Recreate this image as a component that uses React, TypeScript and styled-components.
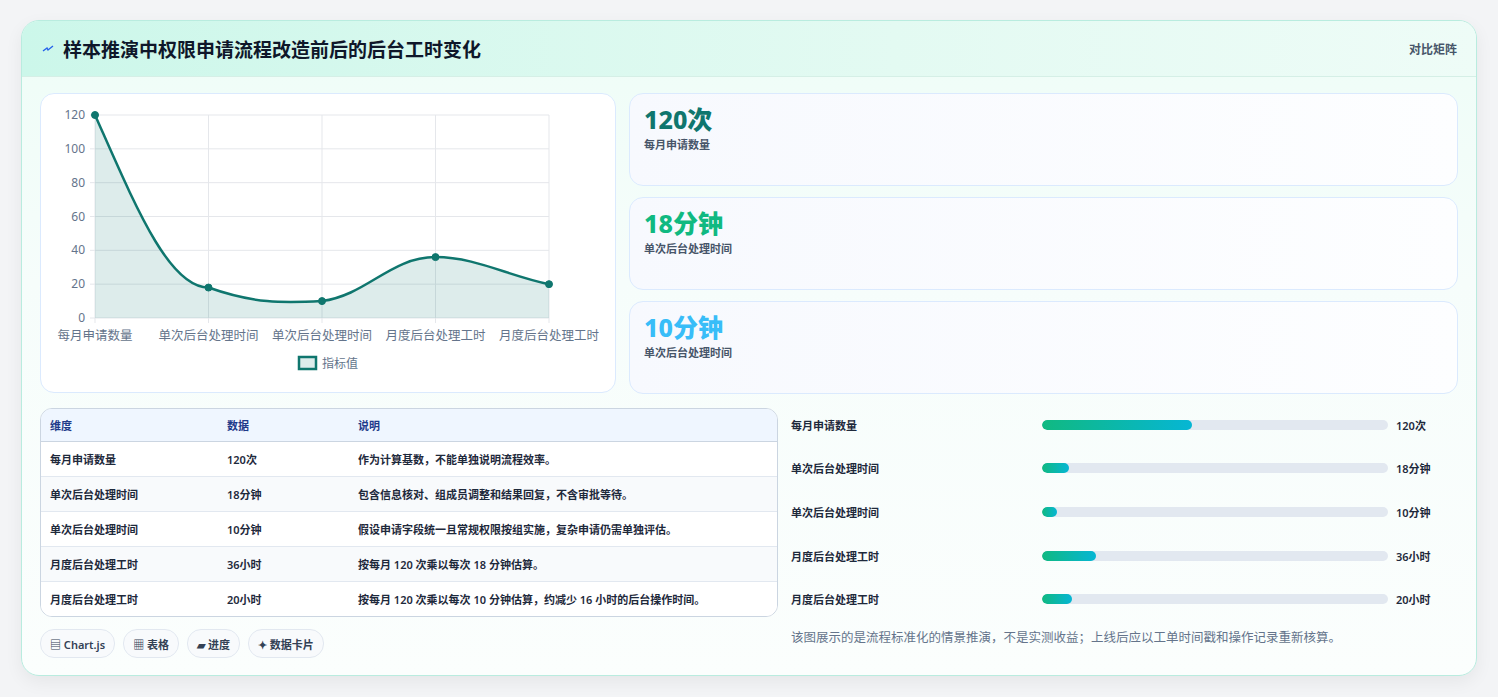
import React from "react";
import styled, { createGlobalStyle } from "styled-components";

const Global = createGlobalStyle`
  html, body { margin: 0; background: #f3f4f6; }
  body { font-family: "Noto Sans", "Noto Sans CJK SC", sans-serif; }
`;

const Page = styled.div`
  padding: 20px 21px 21px 21px;
  height: 697px;
  box-sizing: border-box;
`;

const Card = styled.div`
  border: 1px solid #b9ecdf;
  border-radius: 18px;
  overflow: hidden;
  background: linear-gradient(180deg, #eefdf7 0%, #f6fdfb 40%, #fbfefd 100%);
  box-shadow: 0 6px 18px rgba(0,0,0,0.06);
  height: 656px;
  box-sizing: border-box;
`;

const Header = styled.div`
  height: 55px;
  display: flex;
  align-items: center;
  justify-content: space-between;
  padding: 0 19px 0 20px;
  background: linear-gradient(90deg, #ccf7ea 0%, #e3faf2 60%, #eefcf7 100%);
  border-bottom: 1px solid #d5efe6;
`;

const Title = styled.h1`
  margin: 0;
  font-size: 19px;
  font-weight: 700;
  color: #0f172a;
  display: flex;
  align-items: center;
  gap: 9px;
`;

const HeaderTag = styled.span`
  font-size: 12px;
  font-weight: 600;
  color: #475569;
`;

const Body = styled.div`
  padding: 16px 18px 0 18px;
  display: flex;
  flex-direction: column;
  gap: 14px;
`;

const TopRow = styled.div`
  display: grid;
  grid-template-columns: 576px 1fr;
  gap: 13px;
`;

const Panel = styled.div`
  background: #ffffff;
  border: 1px solid #dbeafe;
  border-radius: 14px;
  height: 300px;
  box-sizing: border-box;
`;

const Stats = styled.div`
  display: flex;
  flex-direction: column;
  gap: 11px;
`;

const Stat = styled.div`
  height: 93px;
  box-sizing: border-box;
  border: 1px solid #dbeafe;
  border-radius: 14px;
  background: linear-gradient(90deg, #f7f9fe, #fdfeff);
  padding: 9px 14px;
`;

const StatValue = styled.div<{ $c: string }>`
  font-size: 25px;
  font-weight: 800;
  color: ${p => p.$c};
  line-height: 32px;
`;

const StatLabel = styled.div`
  font-size: 11px;
  font-weight: 600;
  color: #475569;
  margin-top: 1px;
`;

const BottomRow = styled.div`
  display: grid;
  grid-template-columns: 738px 1fr;
  gap: 13px;
`;

const Left = styled.div`
  display: flex;
  flex-direction: column;
  gap: 12px;
`;

const Table = styled.table`
  width: 100%;
  border-collapse: separate;
  border-spacing: 0;
  border: 1px solid #cbd5e1;
  border-radius: 12px;
  overflow: hidden;
  font-size: 11px;
  color: #1e293b;
  background: #fff;
`;

const Th = styled.th`
  text-align: left;
  font-weight: 600;
  color: #1e3a8a;
  background: #eff6ff;
  height: 32px;
  padding: 0 9px;
  border-bottom: 1px solid #cbd5e1;
`;

const Td = styled.td<{ $last?: boolean }>`
  height: 34px;
  padding: 0 9px;
  font-weight: 600;
  border-bottom: ${p => (p.$last ? "none" : "1px solid #e2e8f0")};
`;

const Tr = styled.tr<{ $alt: boolean }>`
  background: ${p => (p.$alt ? "#f8fafc" : "#ffffff")};
`;

const Chips = styled.div`
  display: flex;
  gap: 8px;
`;

const Chip = styled.span`
  display: inline-flex;
  align-items: center;
  gap: 4px;
  height: 27px;
  padding: 0 9px;
  border: 1px solid #e2e8f0;
  border-radius: 14px;
  background: #f8fafc;
  font-size: 11px;
  font-weight: 600;
  color: #334155;
`;

const Right = styled.div`
  display: flex;
  flex-direction: column;
  margin-top: -5px;
`;

const BarRow = styled.div`
  display: grid;
  grid-template-columns: 243px 346px 1fr;
  align-items: center;
  column-gap: 8px;
  height: 43.6px;
  font-size: 11px;
  font-weight: 600;
  color: #1e293b;
`;

const Track = styled.div`
  height: 10px;
  border-radius: 5px;
  background: #e2e8f0;
  overflow: hidden;
`;

const Fill = styled.div`
  height: 100%;
  border-radius: 5px;
  background: linear-gradient(90deg, #10b981, #06b6d4);
`;

const Note = styled.p`
  margin: 6px 0 0 0;
  font-size: 12.5px;
  color: #64748b;
`;

const rows = [
  ["每月申请数量", "120次", "作为计算基数，不能单独说明流程效率。"],
  ["单次后台处理时间", "18分钟", "包含信息核对、组成员调整和结果回复，不含审批等待。"],
  ["单次后台处理时间", "10分钟", "假设申请字段统一且常规权限按组实施，复杂申请仍需单独评估。"],
  ["月度后台处理工时", "36小时", "按每月 120 次乘以每次 18 分钟估算。"],
  ["月度后台处理工时", "20小时", "按每月 120 次乘以每次 10 分钟估算，约减少 16 小时的后台操作时间。"],
];

const bars: [string, number, string][] = [
  ["每月申请数量", 150, "120次"],
  ["单次后台处理时间", 27, "18分钟"],
  ["单次后台处理时间", 15, "10分钟"],
  ["月度后台处理工时", 54, "36小时"],
  ["月度后台处理工时", 30, "20小时"],
];

const Chart: React.FC = () => {
  const x0 = 54, x1 = 508, yTop = 21, yBot = 224;
  const vals = [120, 18, 10, 36, 20];
  const xs = vals.map((_, i) => x0 + (i * (x1 - x0)) / 4);
  const ys = vals.map(v => yBot - (v * (yBot - yTop)) / 120);
  const labels = ["每月申请数量", "单次后台处理时间", "单次后台处理时间", "月度后台处理工时", "月度后台处理工时"];
  const line = `M${xs[0]},${ys[0]} C${xs[0] + 40},${ys[0] + 90} ${xs[1] - 40},${ys[1]} ${xs[1]},${ys[1]} C${xs[1] + 45},${ys[1] + 16} ${xs[2] - 40},${ys[2] + 2} ${xs[2]},${ys[2]} C${xs[2] + 45},${ys[2] - 6} ${xs[3] - 45},${ys[3]} ${xs[3]},${ys[3]} C${xs[3] + 40},${ys[3]} ${xs[4] - 40},${ys[4] - 8} ${xs[4]},${ys[4]}`;
  return (
    <svg width="574" height="298" style={{ display: "block" }}>
      {[0, 20, 40, 60, 80, 100, 120].map(v => {
        const y = yBot - (v * (yBot - yTop)) / 120;
        return (
          <g key={v}>
            <line x1={x0 - 5} x2={x1} y1={y} y2={y} stroke="#e5e7eb" />
            <text x={x0 - 10} y={y + 4} fontSize="12" textAnchor="end" fill="#64748b" fontFamily="Noto Sans">{v}</text>
          </g>
        );
      })}
      {xs.map((x, i) => (
        <line key={i} x1={x} x2={x} y1={yTop} y2={yBot + 5} stroke="#e5e7eb" />
      ))}
      <path d={`${line} L${x1},${yBot} L${x0},${yBot} Z`} fill="rgba(15,118,110,0.14)" />
      <path d={line} fill="none" stroke="#0f766e" strokeWidth="2.5" />
      {xs.map((x, i) => (
        <circle key={i} cx={x} cy={ys[i]} r="3.5" fill="#0f766e" stroke="#0f766e" />
      ))}
      {labels.map((l, i) => (
        <text key={i} x={xs[i]} y={246} fontSize="12.5" textAnchor="middle" fill="#64748b" fontFamily="Noto Sans CJK SC">{l}</text>
      ))}
      <rect x="258" y="263" width="17" height="12" fill="rgba(15,118,110,0.14)" stroke="#0f766e" strokeWidth="2.5" />
      <text x="281" y="274" fontSize="12" fill="#64748b" fontFamily="Noto Sans CJK SC">指标值</text>
    </svg>
  );
};

export default function App() {
  return (
    <>
      <Global />
      <Page>
        <Card>
          <Header>
            <Title>
              <svg width="12" height="10" viewBox="0 0 12 10">
                <path d="M1 7 L5 4 L6 6 L11 2" stroke="#2563eb" strokeWidth="1.4" fill="none" />
              </svg>
              样本推演中权限申请流程改造前后的后台工时变化
            </Title>
            <HeaderTag>对比矩阵</HeaderTag>
          </Header>
          <Body>
            <TopRow>
              <Panel><Chart /></Panel>
              <Stats>
                <Stat><StatValue $c="#0f766e">120次</StatValue><StatLabel>每月申请数量</StatLabel></Stat>
                <Stat><StatValue $c="#10b981">18分钟</StatValue><StatLabel>单次后台处理时间</StatLabel></Stat>
                <Stat><StatValue $c="#38bdf8">10分钟</StatValue><StatLabel>单次后台处理时间</StatLabel></Stat>
              </Stats>
            </TopRow>
            <BottomRow>
              <Left>
                <Table>
                  <thead>
                    <tr>
                      <Th style={{ width: 159 }}>维度</Th>
                      <Th style={{ width: 113 }}>数据</Th>
                      <Th>说明</Th>
                    </tr>
                  </thead>
                  <tbody>
                    {rows.map((r, i) => (
                      <Tr key={i} $alt={i % 2 === 1}>
                        {r.map((c, j) => <Td key={j} $last={i === rows.length - 1}>{c}</Td>)}
                      </Tr>
                    ))}
                  </tbody>
                </Table>
                <Chips>
                  <Chip>▤ Chart.js</Chip>
                  <Chip>▦ 表格</Chip>
                  <Chip>▰ 进度</Chip>
                  <Chip>✦ 数据卡片</Chip>
                </Chips>
              </Left>
              <Right>
                {bars.map(([l, w, v], i) => (
                  <BarRow key={i}>
                    <span>{l}</span>
                    <Track><Fill style={{ width: w }} /></Track>
                    <span>{v}</span>
                  </BarRow>
                ))}
                <Note>该图展示的是流程标准化的情景推演，不是实测收益；上线后应以工单时间戳和操作记录重新核算。</Note>
              </Right>
            </BottomRow>
          </Body>
        </Card>
      </Page>
    </>
  );
}
